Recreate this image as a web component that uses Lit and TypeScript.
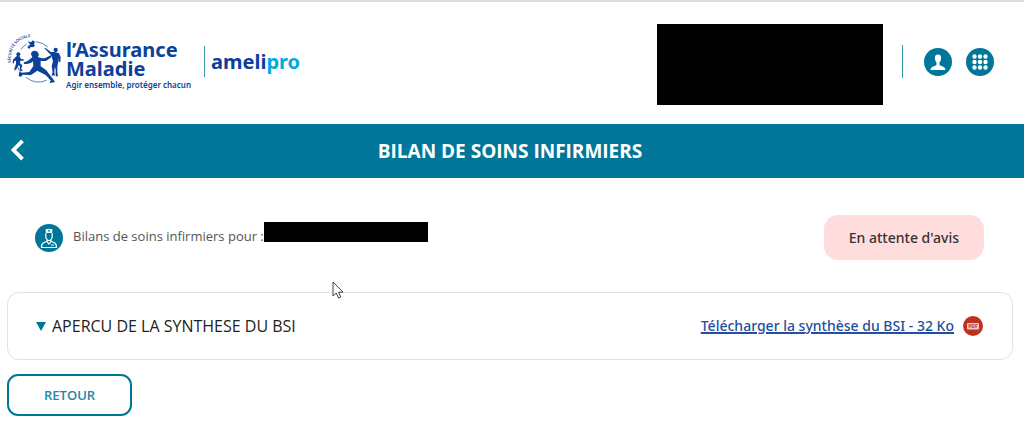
import { LitElement, html, css } from "lit";
import { customElement, state } from "lit/decorators.js";

@customElement("brand-logo")
class BrandLogo extends LitElement {
  static styles = css`
    :host { display: flex; align-items: center; }
    .home { display: flex; align-items: flex-start; color: #0c419a; text-decoration: none; gap: 2px; }
    .emblem { display: block; width: 57px; height: 56px; }
    .name { display: flex; flex-direction: column; padding-top: 8px; }
    .org { font: 700 20px/19px "Noto Sans", "Open Sans", sans-serif; }
    .motto { font: 600 8px/13px "Noto Sans", "Open Sans", sans-serif; white-space: nowrap; }
    .rule { width: 1px; height: 31px; background: #3d9ab3; margin: 0 6px 0 13px; }
    .product { font: 700 20px/28px "Noto Sans", "Open Sans", sans-serif; color: #0c419a; }
    .pro { color: #00a9e0; }
  `;
  render() {
    return html`
      <a class="home" href="#">
        <svg class="emblem" viewBox="20 35 171 168" aria-hidden="true">
          <defs><path id="arc" d="M32 127C27 74 62 43 116 51" /></defs>
          <text font-family="Noto Sans, sans-serif" font-size="12" font-weight="600" fill="#0c419a">
            <textPath href="#arc">SÉCURITÉ SOCIALE</textPath>
          </text>
          <g fill="none" stroke="#3f68b1" stroke-width="2.5">
            <path d="M62 88Q69 76 79 71M106 64Q128 66 142 80M77 171Q105 194 139 180M51 137Q55 151 63 158" />
          </g>
          <g fill="#0c419a">
            <path d="M92 102C92 91 103 88 111 94C117 99 117 107 112 110C120 112 127 116 135 113L151 105L153 111L138 121C131 123 126 122 121 121L121 138C130 145 139 149 144 158L158 176L164 185L150 188L148 184L152 181L136 164L111 151L92 164L67 163L61 170L55 166L57 154L64 157L87 155L99 137L98 123C90 130 80 133 70 130L71 126C82 123 89 117 96 110Z" />
            <circle cx="54" cy="102" r="6" />
            <path d="M49 107L58 108L62 116L70 117L70 121L60 121L59 129L66 135L63 145L67 152L61 153L58 147L59 138L54 135L48 147L43 151L42 146L47 130L47 121L42 122L40 130L37 128L38 118Z" />
            <circle cx="166" cy="89" r="6.500" />
            <path d="M134 82L152 95L163 95L176 99L181 111L180 126L175 124L176 112L174 122L171 139L171 155L173 168L166 168L166 147L163 141L162 157L164 165L155 166L154 161L157 157L154 137L158 123L154 109L151 103L132 84Z" />
            <path d="M82 63L92 66L98 60L104 66L101 71L104 77L97 81L90 80L89 85L82 83L83 77L90 73Z" />
          </g>
        </svg>
        <span class="name">
          <span class="org">l’Assurance<br />Maladie</span>
          <span class="motto">Agir ensemble, protéger chacun</span>
        </span>
      </a>
      <span class="rule"></span>
      <span class="product">ameli<span class="pro">pro</span></span>
    `;
  }
}

@customElement("app-root")
class AppRoot extends LitElement {
  @state() open = false;

  static styles = css`
    :host { display: block; font-family: "Open Sans", "Noto Sans", sans-serif; background: #fff; color: #222; }
    * { box-sizing: border-box; }
    button { font-family: inherit; cursor: pointer; }
    svg { display: block; }
    .top { display: flex; align-items: flex-start; justify-content: space-between; border-top: 2px solid #ddd; padding: 22px 30px 19px 7px; }
    .logo { padding-top: 8px; }
    .tools { display: flex; align-items: flex-start; }
    .account { width: 226px; height: 81px; background: #000; }
    .actions { display: flex; align-items: center; gap: 14px; padding-top: 21px; }
    .split { width: 1px; height: 33px; background: #3d9ab3; margin: 0 7px 0 19px; }
    .round { border: 0; padding: 0; width: 28px; height: 28px; border-radius: 50%; background: #007799; color: #fff; }
    .bar { display: grid; grid-template-columns: 36px 1fr 40px; align-items: center; background: #007799; color: #fff; padding: 13px 0; }
    .back { background: none; border: 0; color: #fff; padding: 0 0 2px 11px; }
    .title { margin: 0; font-size: 19px; line-height: 28px; font-weight: 700; text-align: center; }
    .status { display: flex; align-items: center; justify-content: space-between; padding: 37px 40px 32px 35px; }
    .subject { display: flex; align-items: center; gap: 10px; font-size: 13px; line-height: 20px; color: #555; }
    .who { display: flex; align-items: flex-end; padding-bottom: 8px; }
    .patient { width: 164px; height: 20px; background: #000; margin-bottom: 4px; }
    .badge { background: #ffdddd; border-radius: 14px; padding: 12px 25px; font: 500 14px/21px "Noto Sans", "Open Sans", sans-serif; color: #333; }
    .card { display: flex; align-items: center; justify-content: space-between; border: 1px solid #e2e2e2; border-radius: 12px; margin: 0 11px 14px 7px; padding: 20px 29px 20px 28px; }
    .toggle { display: flex; align-items: center; gap: 6px; border: 0; background: none; padding: 0; color: #222; font-size: 16px; line-height: 26px; }
    .download { display: flex; align-items: center; gap: 9px; color: #244e9e; font: 500 14px/26px "Noto Sans", "Open Sans", sans-serif; }
    .label { text-decoration: underline 1px; text-underline-offset: 2px; }
    .return { margin: 0 0 13px 7px; border: 2px solid #007799; border-radius: 11px; background: #fff; color: #2387a6; padding: 10px 35px; font-size: 13px; line-height: 18px; font-weight: 600; }
    .pointer { position: absolute; left: 332px; top: 281px; pointer-events: none; }
  `;

  render() {
    return html`
      <header class="top">
        <brand-logo class="logo"></brand-logo>
        <div class="tools">
          <div class="account"></div>
          <div class="actions">
            <span class="split"></span>
            <button class="round" aria-label="Mon compte">
              <svg width="28" height="28" viewBox="0 0 28 28"><path fill="currentColor" d="M14 6.500c2.400 0 3.300 1.600 3.100 4-.1 2-.9 3.300-1.600 4v2.200c.6 1.500 6 1.300 6 5.300h-15c0-4 5.400-3.800 6-5.300v-2.200c-.7-.7-1.500-2-1.600-4-.2-2.400.7-4 3.100-4z" /></svg>
            </button>
            <button class="round" aria-label="Applications">
              <svg width="28" height="28" viewBox="0 0 28 28"><path d="M8.500 8.500h0M14 8.500h0M19.500 8.500h0M8.500 14h0M14 14h0M19.500 14h0M8.500 19.500h0M14 19.500h0M19.500 19.500h0" stroke="currentColor" stroke-width="4.400" stroke-linecap="round" /></svg>
            </button>
          </div>
        </div>
      </header>
      <div class="bar">
        <button class="back" aria-label="Retour">
          <svg width="13" height="22" viewBox="0 0 13 22"><path d="M11.500 1.800L2.500 11l9 9.200" fill="none" stroke="currentColor" stroke-width="3.800" /></svg>
        </button>
        <h1 class="title">BILAN DE SOINS INFIRMIERS</h1>
      </div>
      <main>
        <section class="status">
          <div class="subject">
            <svg width="28" height="28" viewBox="0 0 28 28">
              <circle cx="14" cy="14" r="14" fill="#007799" />
              <path d="M10.500 5.500Q14 3.800 17.500 5.500L17 9h-6z" fill="#fff" />
              <path d="M14 5.500v2.500M12.800 6.800h2.400" stroke="#007799" stroke-width=".8" />
              <path d="M10.800 9v3.500c0 2 1.500 4 3.200 4s3.200-2 3.200-4V9M12 16v1.500L14 20l2-2.500V16M12 17.500c-3 .7-5.500 1.300-5.500 6h15c0-4.700-2.500-5.300-5.500-6M16 21h3" fill="none" stroke="#fff" stroke-width="1.200" />
            </svg>
            <div class="who"><span>Bilans de soins infirmiers pour :</span><div class="patient"></div></div>
          </div>
          <span class="badge">En attente d'avis</span>
        </section>
        <section class="card">
          <button class="toggle" aria-expanded=${this.open} @click=${() => (this.open = !this.open)}>
            <svg width="10" height="9" viewBox="0 0 10 9"><path d="M0 0h10L5 9z" fill="#007799" /></svg>
            APERCU DE LA SYNTHESE DU BSI
          </button>
          <a class="download" href="#">
            <span class="label">Télécharger la synthèse du BSI - 32 Ko</span>
            <svg width="20" height="20" viewBox="0 0 20 20">
              <circle cx="10" cy="10" r="10" fill="#c0301f" />
              <rect x="4" y="7" width="12" height="6.500" rx="1" fill="#f1c9c4" />
              <text x="10" y="12.200" text-anchor="middle" font-family="Open Sans, sans-serif" font-size="5" font-weight="700" fill="#c0301f">PDF</text>
            </svg>
          </a>
        </section>
        <button class="return">RETOUR</button>
      </main>
      <svg class="pointer" width="12" height="18" viewBox="0 0 12 18"><path d="M1 1v14l3.200-3 2.300 5 2.300-1-2.300-4.800H11z" fill="#fff" stroke="#444" /></svg>
    `;
  }
}
